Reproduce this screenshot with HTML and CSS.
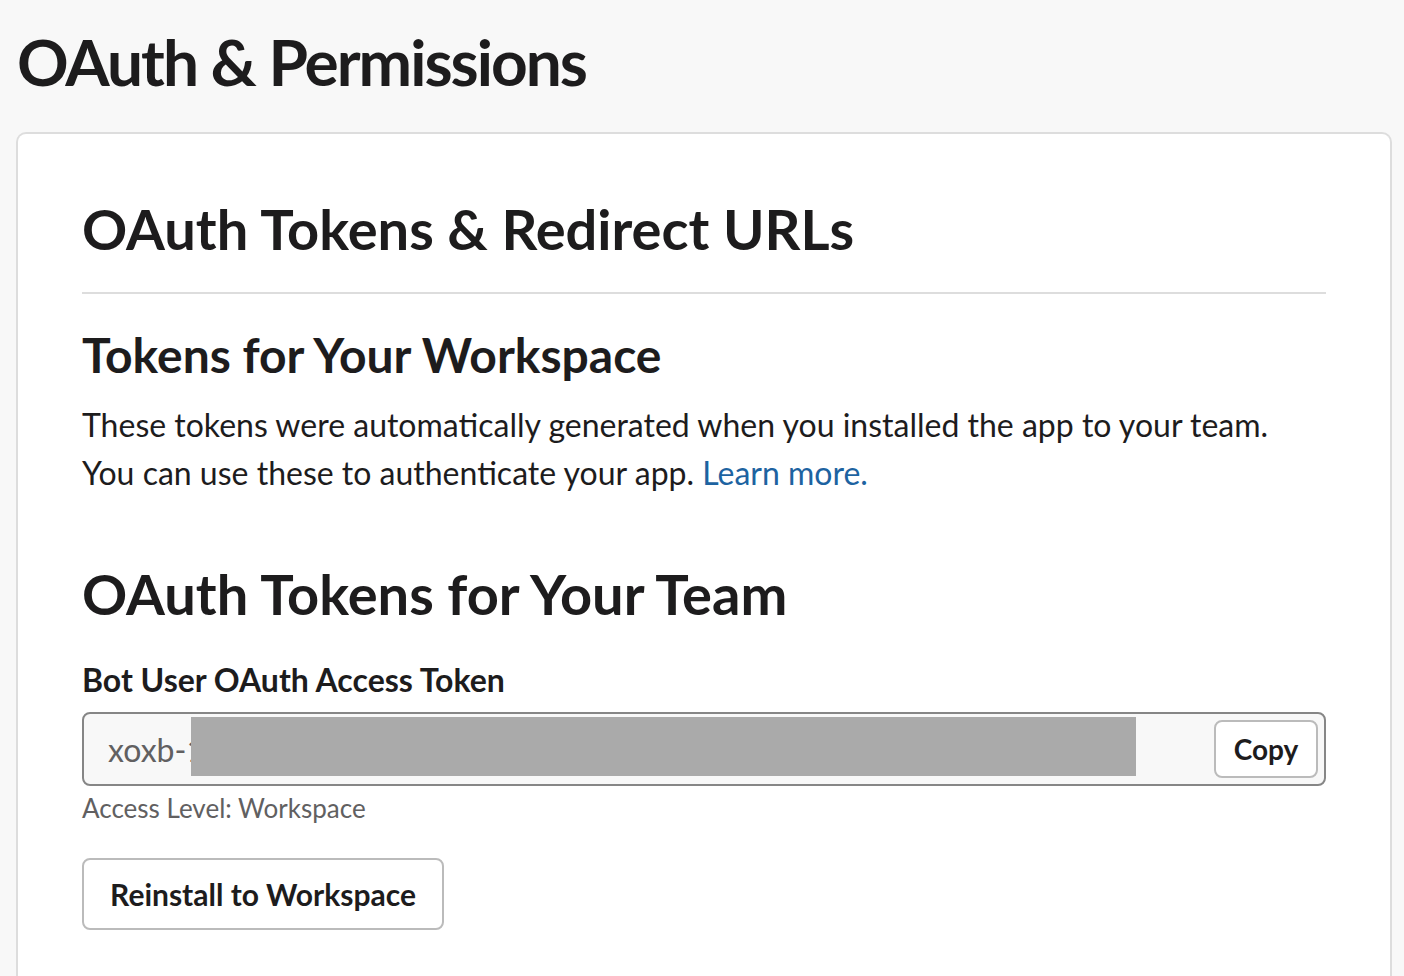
FILE: index.html
```html
<!DOCTYPE html>
<html>
<head>
<meta charset="utf-8">
<link rel="stylesheet" href="styles.css">
</head>
<body>
<div class="page">
  <h1 class="page-title">OAuth &amp; Permissions</h1>
  <div class="card">
    <h2 class="card-title">OAuth Tokens &amp; Redirect URLs</h2>
    <hr class="divider">
    <h3 class="sub-title">Tokens for Your Workspace</h3>
    <p class="desc">These tokens were automatically generated when you installed the app to your team. You can use these to authenticate your app. <a class="link" href="#">Learn more.</a></p>
    <h2 class="team-title">OAuth Tokens for Your Team</h2>
    <div class="field-label">Bot User OAuth Access Token</div>
    <div class="token-input">
      <div class="token-value"><span class="token-text">xoxb-1</span><span class="redact"></span></div>
      <button class="btn btn-copy">Copy</button>
    </div>
    <div class="hint">Access Level: Workspace</div>
    <button class="btn btn-reinstall">Reinstall to Workspace</button>
  </div>
</div>
</body>
</html>
```

FILE: styles.css
```css
html, body {
  margin: 0;
  padding: 0;
  background: #f8f8f8;
  height: 100%;
  overflow: hidden;
}
body {
  font-family: Lato, "Noto Sans", sans-serif;
  color: #1d1c1d;
}
.page {
  padding: 0 12px 0 16px;
}
.page-title {
  margin: 0;
  padding: 22px 0 0 1px;
  font-size: 64px;
  line-height: 80px;
  font-weight: 700;
  letter-spacing: -2px;
  height: 110px;
}
.card {
  background: #fff;
  border: 2px solid #dddddd;
  border-bottom: none;
  border-radius: 10px 10px 0 0;
  padding: 60px 64px 0 64px;
  height: 782px;
  overflow: hidden;
}
.card-title {
  margin: 0;
  font-size: 56px;
  line-height: 70px;
  font-weight: 700;
}
.divider {
  border: none;
  border-top: 2px solid #dddddd;
  margin: 28px 0 0 0;
}
.sub-title {
  margin: 33px 0 0 0;
  font-size: 48px;
  line-height: 56px;
  font-weight: 700;
}
.desc {
  margin: 18px 0 0 0;
  font-size: 32px;
  line-height: 48px;
}
.link {
  color: #1d63a1;
  text-decoration: none;
}
.team-title {
  margin: 62px 0 0 0;
  font-size: 56px;
  line-height: 70px;
  font-weight: 700;
}
.field-label {
  margin-top: 31px;
  font-size: 32px;
  line-height: 40px;
  font-weight: 700;
}
.token-input {
  margin-top: 12px;
  height: 70px;
  border: 2px solid #868686;
  border-radius: 8px;
  background: #f8f8f8;
  display: flex;
  align-items: center;
  justify-content: space-between;
  padding: 0 6px 0 24px;
}
.token-value {
  display: flex;
  align-items: center;
  position: relative;
  height: 100%;
  font-size: 32px;
  color: #616061;
}
.token-text {
  white-space: nowrap;
}
.redact {
  position: absolute;
  left: 83px;
  top: 3px;
  width: 945px;
  height: 59px;
  background: #aaaaaa;
}
.btn {
  font-family: Lato, "Noto Sans", sans-serif;
  font-weight: 700;
  color: #1d1c1d;
  background: #fff;
  border: 2px solid #bbbbbb;
  border-radius: 8px;
  cursor: pointer;
}
.btn-copy {
  width: 104px;
  height: 58px;
  font-size: 28px;
  padding: 0;
}
.hint {
  margin-top: 4px;
  font-size: 26px;
  line-height: 36px;
  color: #616061;
}
.btn-reinstall {
  margin-top: 32px;
  width: 362px;
  height: 72px;
  font-size: 30px;
  padding: 0;
}
```
